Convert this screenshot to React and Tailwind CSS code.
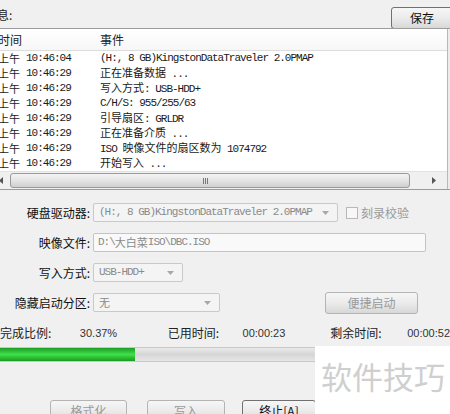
import React from "react";

const CJK = /([\u2000-\u206f\u3000-\u9fff\uff00-\uffef]+)/;

function Mixed({ t }) {
  return t.split(CJK).map((s, i) =>
    CJK.test(s) ? (
      <span key={i} className="tracking-normal [font-family:'Noto_Sans_CJK_SC',sans-serif]">
        {s}
      </span>
    ) : (
      <span key={i}>{s}</span>
    )
  );
}

const rows = [
  ["10:46:04", "(H:, 8 GB)KingstonDataTraveler 2.0PMAP"],
  ["10:46:29", "正在准备数据 ..."],
  ["10:46:29", "写入方式: USB-HDD+"],
  ["10:46:29", "C/H/S: 955/255/63"],
  ["10:46:29", "引导扇区: GRLDR"],
  ["10:46:29", "正在准备介质 ..."],
  ["10:46:29", "ISO 映像文件的扇区数为 1074792"],
  ["10:46:29", "开始写入 ..."],
];

function Arrow() {
  return (
    <svg width="7" height="4" viewBox="0 0 7 4" className="shrink-0">
      <path d="M0 0h7L3.5 4z" fill="#a8a8a8" />
    </svg>
  );
}

function Combo({ w, text, mono }) {
  return (
    <div
      className={`${w} h-[19px] border border-[#c9c9c9] rounded-[2px] bg-[#f4f4f4] flex items-center pl-[5px] pr-[8px] text-[#8a8a8a] text-[11px] leading-none`}
    >
      <div
        className={`flex-1 overflow-hidden whitespace-nowrap ${
          mono ? "[font-family:'Liberation_Mono',monospace] tracking-[-1px]" : ""
        }`}
      >
        {mono ? <Mixed t={text} /> : text}
      </div>
      <Arrow />
    </div>
  );
}

function Btn({ w, children, disabled, className = "" }) {
  return (
    <div
      className={`${w} h-[22px] rounded-[3px] border ${
        disabled ? "border-[#b4b4b4] text-[#9a9a9a]" : "border-[#707070] text-[#111]"
      } bg-gradient-to-b from-[#f6f6f6] via-[#ebebeb] to-[#d8d8d8] flex items-center justify-center text-[12px] leading-none ${className}`}
    >
      {children}
    </div>
  );
}

function Label({ children }) {
  return (
    <div className="w-[91px] text-right pr-[1px] text-[12px] leading-none text-[#111]">
      {children}
    </div>
  );
}

export default function App() {
  return (
    <div className="relative w-[450px] h-[414px] overflow-hidden bg-[#f0f0f0] [font-family:'Noto_Sans_CJK_SC',sans-serif] flex flex-col">
      {/* top bar */}
      <div className="h-[28px] flex items-start shrink-0">
        <div className="ml-[-15px] mt-[9px] text-[12px] leading-none text-[#222]">信息:</div>
        <div className="flex-1" />
        <Btn w="w-[62px]" className="mt-[7px] mr-[-3px] h-[20px]">
          保存
        </Btn>
      </div>

      {/* list */}
      <div className="h-[162px] shrink-0 flex border-t border-b border-[#9c9c9c] bg-white">
        <div className="w-[448px] flex flex-col border-r border-[#b8b8b8] overflow-hidden">
          <div className="h-[22px] shrink-0 flex items-center border-b border-[#dcdcdc] bg-gradient-to-b from-white to-[#f7f7f7] text-[12px] leading-none text-[#222]">
            <div className="w-[102px] ml-[-2px]">时间</div>
            <div>事件</div>
          </div>
          <div className="flex flex-col text-[11px] leading-none text-[#1a1a1a] [font-family:'Liberation_Mono',monospace] tracking-[-1px]">
            {rows.map((r, i) => (
              <div key={i} className="h-[15px] flex items-center whitespace-nowrap">
                <div className="w-[102px] ml-[-2px] flex items-center">
                  <span className="tracking-normal [font-family:'Noto_Sans_CJK_SC',sans-serif] w-[28px]">上午</span>
                  <span>{r[0]}</span>
                </div>
                <div>
                  <Mixed t={r[1]} />
                </div>
              </div>
            ))}
          </div>
          <div className="flex-1" />
          {/* horizontal scrollbar */}
          <div className="h-[18px] shrink-0 flex items-center bg-[#f0f0f0] border-t border-[#e2e2e2]">
            <div className="w-[10px] h-full flex items-center">
              <svg width="4" height="7" viewBox="0 0 4 7" className="ml-[-1px]">
                <path d="M4 0v7L0 3.5z" fill="#555" />
              </svg>
            </div>
            <div className="w-[400px] h-[15px] rounded-[3px] border border-[#9a9a9a] bg-gradient-to-b from-[#f4f4f4] via-[#e4e4e4] to-[#cfcfcf] flex items-center justify-center">
              <div className="flex gap-[1px] ml-[-10px]">
                <div className="w-[1px] h-[6px] bg-[#777]" />
                <div className="w-[1px] h-[6px] bg-[#777]" />
                <div className="w-[1px] h-[6px] bg-[#777]" />
              </div>
            </div>
            <div className="flex-1 flex items-center justify-center">
              <svg width="4" height="7" viewBox="0 0 4 7" className="ml-[10px]">
                <path d="M0 0v7l4-3.5z" fill="#555" />
              </svg>
            </div>
          </div>
        </div>
        <div className="flex-1 bg-[#ececec]" />
      </div>

      {/* form */}
      <div className="mt-[13px] flex flex-col gap-[11px] shrink-0">
        <div className="flex items-center h-[19px]">
          <Label>硬盘驱动器:</Label>
          <div className="ml-[2px]" />
          <Combo w="w-[245px]" text="(H:, 8 GB)KingstonDataTraveler 2.0PMAP" mono />
          <div className="ml-[8px] w-[12px] h-[12px] border border-[#b8b8b8] bg-[#f7f7f7]" />
          <div className="ml-[3px] text-[12px] leading-none text-[#9a9a9a]">刻录校验</div>
        </div>
        <div className="flex items-center h-[19px]">
          <Label>映像文件:</Label>
          <div className="ml-[2px] w-[333px] h-[19px] border border-[#c4c4c4] rounded-[2px] bg-[#f9f9f9] flex items-center pl-[4px] text-[11px] leading-none text-[#8a8a8a] [font-family:'Liberation_Mono',monospace] tracking-[-1px]">
            <Mixed t="D:\大白菜ISO\DBC.ISO" />
          </div>
        </div>
        <div className="flex items-center h-[19px]">
          <Label>写入方式:</Label>
          <div className="ml-[2px]" />
          <Combo w="w-[90px]" text="USB-HDD+" mono />
        </div>
        <div className="flex items-center h-[19px]">
          <Label>隐藏启动分区:</Label>
          <div className="ml-[2px]" />
          <Combo w="w-[127px]" text="无" />
          <Btn w="w-[93px]" disabled className="ml-[105px] h-[21px]">
            便捷启动
          </Btn>
        </div>
      </div>

      {/* stats */}
      <div className="mt-[14px] h-[14px] flex items-center text-[12px] leading-none text-[#222] shrink-0 whitespace-nowrap">
        <div className="w-[80px]">完成比例:</div>
        <div className="w-[88px] text-[11px] [font-family:'Liberation_Sans',sans-serif] text-[#333]">30.37%</div>
        <div className="w-[75px]">已用时间:</div>
        <div className="w-[88px] text-[11px] [font-family:'Liberation_Sans',sans-serif] text-[#333]">00:00:23</div>
        <div className="w-[77px]">剩余时间:</div>
        <div className="text-[11px] [font-family:'Liberation_Sans',sans-serif] text-[#333]">00:00:52</div>
      </div>

      {/* progress */}
      <div className="mt-[7px] h-[15px] shrink-0 flex bg-gradient-to-b from-[#e9e9e9] via-[#d6d6d6] to-[#e6e6e6] border-y border-[#c8c8c8]">
        <div className="w-[135px] h-full bg-gradient-to-b from-[#1d9e25] via-[#3fe04a] to-[#1a9a22]" />
      </div>

      {/* buttons */}
      <div className="mt-[38px] flex shrink-0">
        <Btn w="w-[77px]" disabled className="ml-[50px]">格式化</Btn>
        <Btn w="w-[78px]" disabled className="ml-[20px]">写入</Btn>
        <Btn w="w-[74px]" className="ml-[17px] [font-family:'Noto_Sans_CJK_SC',sans-serif]">终止[A]</Btn>
      </div>

      {/* watermark overlay */}
      <div className="absolute left-[315px] top-[346px] w-[135px] h-[68px] bg-white flex items-start">
        <div className="mt-[14px] ml-[6px] text-[31px] leading-none text-[#cfcfcf] whitespace-nowrap">软件技巧</div>
      </div>
    </div>
  );
}
